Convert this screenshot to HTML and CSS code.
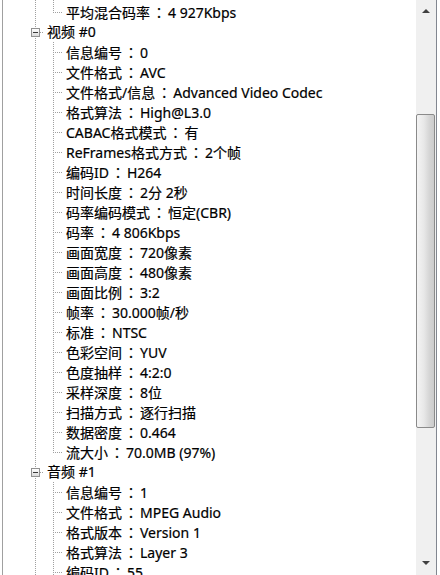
FILE: index.html
```html
<!DOCTYPE html>
<html lang="zh-CN">
<head>
<meta charset="utf-8">
<title>MediaInfo</title>
<link rel="stylesheet" href="styles.css">
</head>
<body>
<div class="frame">
  <div class="tree">
    <div class="row spacer"><span class="g v"></span><span class="g v"></span></div>
    <div class="row"><span class="g v"></span><span class="g l"></span><span class="txt">平均混合码率<span class="c" lang="ja">：</span>4 927Kbps</span></div>
    <div class="row"><span class="g n"><span class="box"></span></span><span class="txt node">视频 #0</span></div>
    <div class="row"><span class="g v"></span><span class="g t"></span><span class="txt">信息编号<span class="c" lang="ja">：</span>0</span></div>
    <div class="row"><span class="g v"></span><span class="g t"></span><span class="txt">文件格式<span class="c" lang="ja">：</span>AVC</span></div>
    <div class="row"><span class="g v"></span><span class="g t"></span><span class="txt">文件格式/信息<span class="c" lang="ja">：</span>Advanced Video Codec</span></div>
    <div class="row"><span class="g v"></span><span class="g t"></span><span class="txt">格式算法<span class="c" lang="ja">：</span>High@L3.0</span></div>
    <div class="row"><span class="g v"></span><span class="g t"></span><span class="txt">CABAC格式模式<span class="c" lang="ja">：</span>有</span></div>
    <div class="row"><span class="g v"></span><span class="g t"></span><span class="txt">ReFrames格式方式<span class="c" lang="ja">：</span>2个帧</span></div>
    <div class="row"><span class="g v"></span><span class="g t"></span><span class="txt">编码ID<span class="c" lang="ja">：</span>H264</span></div>
    <div class="row"><span class="g v"></span><span class="g t"></span><span class="txt">时间长度<span class="c" lang="ja">：</span>2分 2秒</span></div>
    <div class="row"><span class="g v"></span><span class="g t"></span><span class="txt">码率编码模式<span class="c" lang="ja">：</span>恒定(CBR)</span></div>
    <div class="row"><span class="g v"></span><span class="g t"></span><span class="txt">码率<span class="c" lang="ja">：</span>4 806Kbps</span></div>
    <div class="row"><span class="g v"></span><span class="g t"></span><span class="txt">画面宽度<span class="c" lang="ja">：</span>720像素</span></div>
    <div class="row"><span class="g v"></span><span class="g t"></span><span class="txt">画面高度<span class="c" lang="ja">：</span>480像素</span></div>
    <div class="row"><span class="g v"></span><span class="g t"></span><span class="txt">画面比例<span class="c" lang="ja">：</span>3:2</span></div>
    <div class="row"><span class="g v"></span><span class="g t"></span><span class="txt">帧率<span class="c" lang="ja">：</span>30.000帧/秒</span></div>
    <div class="row"><span class="g v"></span><span class="g t"></span><span class="txt">标准<span class="c" lang="ja">：</span>NTSC</span></div>
    <div class="row"><span class="g v"></span><span class="g t"></span><span class="txt">色彩空间<span class="c" lang="ja">：</span>YUV</span></div>
    <div class="row"><span class="g v"></span><span class="g t"></span><span class="txt">色度抽样<span class="c" lang="ja">：</span>4:2:0</span></div>
    <div class="row"><span class="g v"></span><span class="g t"></span><span class="txt">采样深度<span class="c" lang="ja">：</span>8位</span></div>
    <div class="row"><span class="g v"></span><span class="g t"></span><span class="txt">扫描方式<span class="c" lang="ja">：</span>逐行扫描</span></div>
    <div class="row"><span class="g v"></span><span class="g t"></span><span class="txt">数据密度<span class="c" lang="ja">：</span>0.464</span></div>
    <div class="row"><span class="g v"></span><span class="g l"></span><span class="txt">流大小<span class="c" lang="ja">：</span>70.0MB (97%)</span></div>
    <div class="row"><span class="g n"><span class="box"></span></span><span class="txt node">音频 #1</span></div>
    <div class="row"><span class="g v"></span><span class="g t"></span><span class="txt">信息编号<span class="c" lang="ja">：</span>1</span></div>
    <div class="row"><span class="g v"></span><span class="g t"></span><span class="txt">文件格式<span class="c" lang="ja">：</span>MPEG Audio</span></div>
    <div class="row"><span class="g v"></span><span class="g t"></span><span class="txt">格式版本<span class="c" lang="ja">：</span>Version 1</span></div>
    <div class="row"><span class="g v"></span><span class="g t"></span><span class="txt">格式算法<span class="c" lang="ja">：</span>Layer 3</span></div>
    <div class="row"><span class="g v"></span><span class="g t"></span><span class="txt">编码ID<span class="c" lang="ja">：</span>55</span></div>
  </div>
  <div class="scrollbar">
    <div class="sb-btn up"><span class="arrow-up"></span></div>
    <div class="sb-track">
      <div class="sb-gap"></div>
      <div class="sb-thumb"></div>
    </div>
    <div class="sb-btn down"><span class="arrow-down"></span></div>
  </div>
</div>
</body>
</html>
```
FILE: styles.css
```css
html, body {
  margin: 0;
  padding: 0;
  background: #fff;
  overflow: hidden;
}
body {
  font-family: "Noto Sans", "Noto Sans CJK SC", sans-serif;
  font-size: 14px;
  color: #000;
}
.frame {
  display: flex;
  height: 575px;
  margin: 0 3px 0 2px;
  border-left: 1px solid #a0a0a0;
  border-right: 1px solid #828790;
  overflow: hidden;
}
.tree {
  flex: 1;
  min-width: 0;
  padding-left: 23px;
  overflow: hidden;
}
.row {
  display: flex;
  height: 20px;
}
.row.spacer {
  height: 2px;
}
.g {
  width: 18px;
  flex: none;
  background-repeat: no-repeat;
}
.v {
  background-image: repeating-linear-gradient(to bottom, #a0a0a0 0 1px, transparent 1px 2px);
  background-size: 1px 100%;
  background-position: 9px 0;
}
.t {
  background-image:
    repeating-linear-gradient(to bottom, #a0a0a0 0 1px, transparent 1px 2px),
    repeating-linear-gradient(to right, #a0a0a0 0 1px, transparent 1px 2px);
  background-size: 1px 100%, 9px 1px;
  background-position: 9px 0, 9px 10px;
}
.l {
  background-image:
    repeating-linear-gradient(to bottom, #a0a0a0 0 1px, transparent 1px 2px),
    repeating-linear-gradient(to right, #a0a0a0 0 1px, transparent 1px 2px);
  background-size: 1px 11px, 9px 1px;
  background-position: 9px 0, 9px 10px;
}
.n {
  display: flex;
  align-items: flex-start;
  background-image:
    repeating-linear-gradient(to bottom, #a0a0a0 0 1px, transparent 1px 2px),
    repeating-linear-gradient(to right, #a0a0a0 0 1px, transparent 1px 2px);
  background-size: 1px 100%, 4px 1px;
  background-position: 9px 0, 14px 10px;
}
.box {
  box-sizing: border-box;
  width: 9px;
  height: 9px;
  margin: 6px 0 0 5px;
  border: 1px solid #919191;
  background: linear-gradient(#ffffff, #dadada);
  display: flex;
  align-items: center;
  justify-content: center;
}
.box::after {
  content: "";
  width: 5px;
  height: 1px;
  background: #3a3a3a;
}
.txt {
  padding-left: 4px;
  line-height: 20px;
  white-space: nowrap;
  -webkit-text-stroke: 0.2px #000;
}
.txt.node {
  padding-left: 3px;
}
.c {
  font-family: "Noto Sans CJK JP", "Noto Sans CJK TC", sans-serif;
  padding: 0 2px;
}
.scrollbar {
  width: 20px;
  flex: none;
  display: flex;
  flex-direction: column;
  background: #f0f0f0;
}
.sb-btn {
  flex: none;
  display: flex;
  justify-content: center;
}
.sb-btn.up {
  height: 22px;
  align-items: flex-start;
}
.sb-btn.down {
  height: 24px;
  align-items: flex-end;
}
.arrow-up {
  width: 0;
  height: 0;
  margin-top: 9px;
  border-left: 4px solid transparent;
  border-right: 4px solid transparent;
  border-bottom: 4px solid #404040;
}
.arrow-down {
  width: 0;
  height: 0;
  margin-bottom: 10px;
  border-left: 4px solid transparent;
  border-right: 4px solid transparent;
  border-top: 4px solid #404040;
}
.sb-track {
  flex: 1;
  display: flex;
  flex-direction: column;
}
.sb-gap {
  height: 92px;
  flex: none;
}
.sb-thumb {
  height: 314px;
  flex: none;
  box-sizing: border-box;
  margin-right: 1px;
  border: 1px solid #8a8a8a;
  border-radius: 2px;
  background: linear-gradient(to right, #f4f4f4 0%, #e8e8e8 40%, #d4d4d4 75%, #cccccc 100%);
}
```
